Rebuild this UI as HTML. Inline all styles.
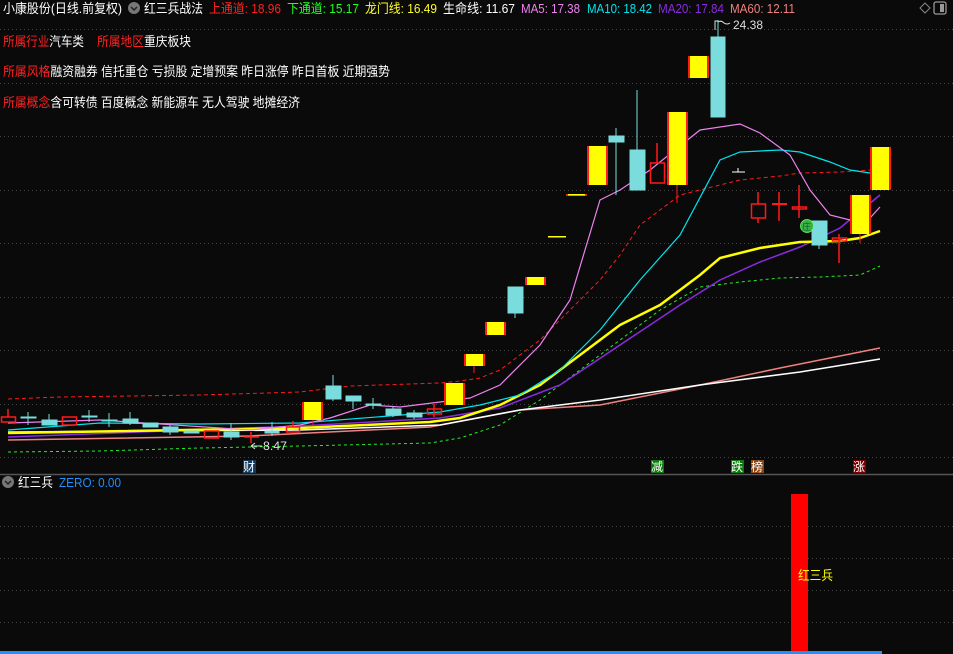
<!DOCTYPE html>
<html><head><meta charset="utf-8"><style>
html,body{margin:0;padding:0;background:#0a0a0a;width:953px;height:654px;overflow:hidden}
svg{display:block}
text{font-family:"Liberation Sans","Noto Sans CJK SC",sans-serif;font-size:13px}
</style></head><body>
<svg width="953" height="654" xmlns="http://www.w3.org/2000/svg">
<rect width="953" height="654" fill="#0a0a0a"/>
<g stroke="#444" stroke-width="1" stroke-dasharray="1,3">
<line x1="0" y1="29.5" x2="953" y2="29.5"/><line x1="0" y1="83.5" x2="953" y2="83.5"/>
<line x1="0" y1="136.5" x2="953" y2="136.5"/><line x1="0" y1="190.5" x2="953" y2="190.5"/>
<line x1="0" y1="243.5" x2="953" y2="243.5"/><line x1="0" y1="297.5" x2="953" y2="297.5"/>
<line x1="0" y1="350.5" x2="953" y2="350.5"/><line x1="0" y1="404.5" x2="953" y2="404.5"/>
<line x1="0" y1="457.5" x2="953" y2="457.5"/>
<line x1="0" y1="526.5" x2="953" y2="526.5"/><line x1="0" y1="558.5" x2="953" y2="558.5"/>
<line x1="0" y1="590.5" x2="953" y2="590.5"/><line x1="0" y1="622.5" x2="953" y2="622.5"/>
</g>
<line x1="0" y1="474.5" x2="953" y2="474.5" stroke="#555" stroke-width="1.5"/>

<g fill="none">
<polyline stroke="#ff1a1a" stroke-width="1" stroke-dasharray="4,3" points="8,399 60,397 200,395 300,392 350,386 440,383 460,381 480,378 500,370 520,355 540,340 560,320 580,300 600,280 620,255 640,225 660,210 680,195 700,190 720,185 740,180 760,178 780,176 800,173 840,172 870,170 880,168"/>
<polyline stroke="#22ee22" stroke-width="1" stroke-dasharray="3,3" points="8,452 100,451 200,448 300,446 430,443 460,438 500,425 540,400 580,370 620,340 660,310 700,287 740,282 780,278 820,277 860,275 880,266"/>
<polyline stroke="#f08080" stroke-width="1.5" points="8,440 250,436 430,427 520,410 600,405 700,385 780,368 880,348"/>
<polyline stroke="#ffffff" stroke-width="1.5" points="8,432 300,430 440,425 520,410 600,400 700,385 800,372 880,359"/>
<polyline stroke="#8a2be2" stroke-width="1.5" points="8,437 300,426 440,418 500,408 560,385 620,345 680,305 720,280 760,262 800,247 840,228 880,195"/>
<polyline stroke="#ffff00" stroke-width="2.5" points="8,433 300,428 430,422 460,418 500,405 540,385 580,355 620,325 660,305 700,275 720,258 760,248 800,242 840,241 860,238 880,231"/>
<polyline stroke="#00e5ee" stroke-width="1.2" points="8,430 100,423 200,424 300,423 440,412 480,405 520,395 560,370 600,330 640,280 680,235 720,160 740,152 780,150 800,152 830,162 850,170 870,173 880,176"/>
<polyline stroke="#ee82ee" stroke-width="1.2" points="8,423 100,420 250,430 300,425 330,418 370,405 400,407 440,402 470,398 500,385 540,345 570,300 600,200 620,190 650,170 700,130 740,124 760,133 790,155 810,190 830,215 850,220 870,218 880,207"/>
</g>

<g stroke-width="1">
<g fill="#7adcdc" stroke="#7adcdc">
<line x1="28" y1="412" x2="28" y2="425"/><rect x="21" y="417" width="15" height="1"/>
<rect x="42" y="420" width="15" height="5"/><line x1="49" y1="414" x2="49" y2="420"/>
<line x1="89" y1="410" x2="89" y2="422"/><rect x="82" y="416" width="15" height="1"/>
<line x1="109" y1="413" x2="109" y2="427"/><rect x="102" y="420" width="15" height="1"/>
<rect x="123" y="419" width="15" height="4"/><line x1="130" y1="412" x2="130" y2="425"/>
<rect x="143" y="423" width="15" height="4"/>
<rect x="163" y="427" width="15" height="5"/><line x1="170" y1="425" x2="170" y2="435"/>
<rect x="184" y="431" width="15" height="2"/>
<rect x="224" y="432" width="15" height="5"/><line x1="231" y1="423" x2="231" y2="440"/>
<rect x="265" y="431" width="14" height="2"/><line x1="272" y1="422" x2="272" y2="436"/>
<rect x="326" y="386" width="15" height="13"/><line x1="333" y1="375" x2="333" y2="401"/>
<rect x="346" y="396" width="15" height="5"/><line x1="353" y1="401" x2="353" y2="409"/>
<rect x="366" y="404" width="15" height="1"/><line x1="373" y1="398" x2="373" y2="409"/>
<rect x="386" y="409" width="15" height="6"/><line x1="393" y1="406" x2="393" y2="417"/>
<rect x="407" y="413" width="15" height="4"/><line x1="414" y1="410" x2="414" y2="419"/>
<rect x="508" y="287" width="15" height="26"/><line x1="515" y1="313" x2="515" y2="318"/>
<rect x="609" y="136" width="15" height="6"/><line x1="616" y1="128" x2="616" y2="195"/>
<rect x="630" y="150" width="15" height="40"/><line x1="637" y1="90" x2="637" y2="150"/>
<rect x="711" y="37" width="14" height="80"/><line x1="718" y1="20" x2="718" y2="37"/>
<rect x="812" y="221" width="15" height="24"/><line x1="819" y1="245" x2="819" y2="249"/>
</g>
<g fill="none" stroke="#ff1a1a" stroke-width="1.5">
<rect x="1.5" y="417" width="14" height="5"/><line x1="8" y1="409" x2="8" y2="417"/>
<rect x="62.5" y="417" width="14" height="8"/>
<rect x="204.5" y="431" width="14" height="7"/>
<line x1="244" y1="437" x2="259" y2="437"/><line x1="251" y1="432" x2="251" y2="443"/>
<rect x="286.5" y="427" width="13" height="5"/><line x1="293" y1="421" x2="293" y2="427"/>
<rect x="427.5" y="409" width="14" height="5"/><line x1="434" y1="404" x2="434" y2="417"/>
<rect x="650.5" y="163" width="14" height="20"/><line x1="657" y1="143" x2="657" y2="163"/>
<rect x="751.5" y="204" width="14" height="14"/><line x1="758" y1="192" x2="758" y2="204"/><line x1="758" y1="218" x2="758" y2="223"/>
<line x1="772" y1="204" x2="787" y2="204" stroke-width="2"/><line x1="779" y1="192" x2="779" y2="221"/>
<rect x="792.5" y="207" width="14" height="2"/><line x1="799" y1="185" x2="799" y2="218"/>
<rect x="832.5" y="238" width="14" height="3"/><line x1="839" y1="234" x2="839" y2="263"/>
</g>
<g>
<line x1="313" y1="420" x2="313" y2="425" stroke="#ff1a1a"/>
<rect x="302" y="402" width="21" height="18" fill="#ff1a1a"/><rect x="304" y="402" width="17" height="18" fill="#ffff00"/>
<rect x="444" y="383" width="21" height="22" fill="#ff1a1a"/><rect x="446" y="383" width="17" height="22" fill="#ffff00"/>
<line x1="474" y1="366" x2="474" y2="373" stroke="#ff1a1a"/>
<rect x="464" y="354" width="21" height="12" fill="#ff1a1a"/><rect x="466" y="354" width="17" height="12" fill="#ffff00"/>
<rect x="485" y="322" width="21" height="13" fill="#ff1a1a"/><rect x="487" y="322" width="17" height="13" fill="#ffff00"/>
<rect x="525" y="277" width="21" height="8" fill="#ff1a1a"/><rect x="527" y="277" width="17" height="8" fill="#ffff00"/>
<rect x="548" y="236" width="18" height="1.5" fill="#ffff00"/>
<rect x="566" y="194" width="21" height="2" fill="#ff1a1a"/><rect x="568" y="194" width="17" height="1.5" fill="#ffff00"/>
<rect x="587" y="146" width="21" height="39" fill="#ff1a1a"/><rect x="589" y="146" width="17" height="39" fill="#ffff00"/>
<line x1="677" y1="185" x2="677" y2="203" stroke="#ff1a1a"/>
<rect x="667" y="112" width="21" height="73" fill="#ff1a1a"/><rect x="669" y="112" width="17" height="73" fill="#ffff00"/>
<rect x="688" y="56" width="21" height="22" fill="#ff1a1a"/><rect x="690" y="56" width="17" height="22" fill="#ffff00"/>
<line x1="860" y1="234" x2="860" y2="243" stroke="#ff1a1a"/>
<rect x="850" y="195" width="21" height="39" fill="#ff1a1a"/><rect x="852" y="195" width="17" height="39" fill="#ffff00"/>
<rect x="870" y="147" width="21" height="43" fill="#ff1a1a"/><rect x="872" y="147" width="17" height="43" fill="#ffff00"/>
</g>
<line x1="732" y1="172" x2="745" y2="172" stroke="#fff"/><line x1="738" y1="168" x2="738" y2="172" stroke="#fff"/>
</g>
<circle cx="807" cy="226" r="6.5" fill="#3cb043" stroke="#6f6" stroke-width="0.8"/><text x="802" y="230" fill="#063" style="font-size:9px">庄</text>

<path d="M715 30 V21 H718 M718 22 q3 -2 6 1 q3 2 6 0" stroke="#ddd" fill="none"/>
<text x="733" y="29" fill="#ddd" style="font-size:12px" textLength="30" lengthAdjust="spacingAndGlyphs">24.38</text>
<path d="M251 446 H262 M251 446 l4 -3 M251 446 l4 3" stroke="#ddd" fill="none"/>
<text x="263" y="450" fill="#ddd" style="font-size:12px" textLength="24" lengthAdjust="spacingAndGlyphs">8.47</text>

<rect x="243" y="460" width="13" height="13" fill="#123a5e"/><text x="243" y="471" fill="#fff" style="font-size:12px">财</text>
<rect x="651" y="460" width="13" height="13" fill="#0a7a0a"/><text x="651" y="471" fill="#fff" style="font-size:12px">减</text>
<rect x="731" y="460" width="13" height="13" fill="#0a7a0a"/><text x="731" y="471" fill="#fff" style="font-size:12px">跌</text>
<rect x="751" y="460" width="13" height="13" fill="#8b4513"/><text x="751" y="471" fill="#fff" style="font-size:12px">榜</text>
<rect x="853" y="460" width="13" height="13" fill="#7a0000"/><text x="853" y="471" fill="#fff" style="font-size:12px">涨</text>

<g style="font-size:13px">
<text x="3" y="13" fill="#fff" textLength="119" lengthAdjust="spacingAndGlyphs">小康股份(日线.前复权)</text>
<circle cx="134" cy="8" r="6" fill="#777"/><path d="M131 7 L134 10 L137 7" stroke="#222" stroke-width="1.5" fill="none"/>
<text x="144" y="13" fill="#fff" textLength="59" lengthAdjust="spacingAndGlyphs">红三兵战法</text>
<text x="209" y="13" fill="#ff2020" textLength="72" lengthAdjust="spacingAndGlyphs">上通道: 18.96</text>
<text x="287" y="13" fill="#20ff20" textLength="72" lengthAdjust="spacingAndGlyphs">下通道: 15.17</text>
<text x="365" y="13" fill="#ffff20" textLength="72" lengthAdjust="spacingAndGlyphs">龙门线: 16.49</text>
<text x="443" y="13" fill="#fff" textLength="72" lengthAdjust="spacingAndGlyphs">生命线: 11.67</text>
<text x="521" y="13" fill="#ee82ee" textLength="59" lengthAdjust="spacingAndGlyphs">MA5: 17.38</text>
<text x="587" y="13" fill="#00e5ee" textLength="65" lengthAdjust="spacingAndGlyphs">MA10: 18.42</text>
<text x="658" y="13" fill="#8a2be2" textLength="66" lengthAdjust="spacingAndGlyphs">MA20: 17.84</text>
<text x="730" y="13" fill="#f08080" textLength="65" lengthAdjust="spacingAndGlyphs">MA60: 12.11</text>
</g>
<path d="M925 3 L930 8 L925 13 L920 8 Z" stroke="#888" fill="none"/>
<rect x="934" y="2" width="12" height="12" rx="2" stroke="#999" fill="none" stroke-width="1.3"/><rect x="940" y="4" width="4" height="8" fill="#999"/>

<text x="3" y="46" fill="#ff2020" textLength="81" lengthAdjust="spacingAndGlyphs">所属行业<tspan fill="#fff">汽车类</tspan></text>
<text x="97" y="46" fill="#ff2020" textLength="94" lengthAdjust="spacingAndGlyphs">所属地区<tspan fill="#fff">重庆板块</tspan></text>
<text x="3" y="76" fill="#ff2020" textLength="387" lengthAdjust="spacingAndGlyphs">所属风格<tspan fill="#fff">融资融券 信托重仓 亏损股 定增预案 昨日涨停 昨日首板 近期强势</tspan></text>
<text x="3" y="107" fill="#ff2020" textLength="297" lengthAdjust="spacingAndGlyphs">所属概念<tspan fill="#fff">含可转债 百度概念 新能源车 无人驾驶 地摊经济</tspan></text>

<circle cx="8" cy="482" r="6" fill="#777"/><path d="M5 481 L8 484 L11 481" stroke="#222" stroke-width="1.5" fill="none"/>
<text x="18" y="487" fill="#fff" textLength="35" lengthAdjust="spacingAndGlyphs">红三兵</text>
<text x="59" y="487" fill="#1e90ff" textLength="62" lengthAdjust="spacingAndGlyphs">ZERO: 0.00</text>
<rect x="791" y="494" width="17" height="160" fill="#ff0000"/>
<text x="798" y="580" fill="#ffff00" textLength="35" lengthAdjust="spacingAndGlyphs">红三兵</text>
<rect x="0" y="651" width="882" height="3" fill="#1e90ff"/>
</svg>
</body></html>
